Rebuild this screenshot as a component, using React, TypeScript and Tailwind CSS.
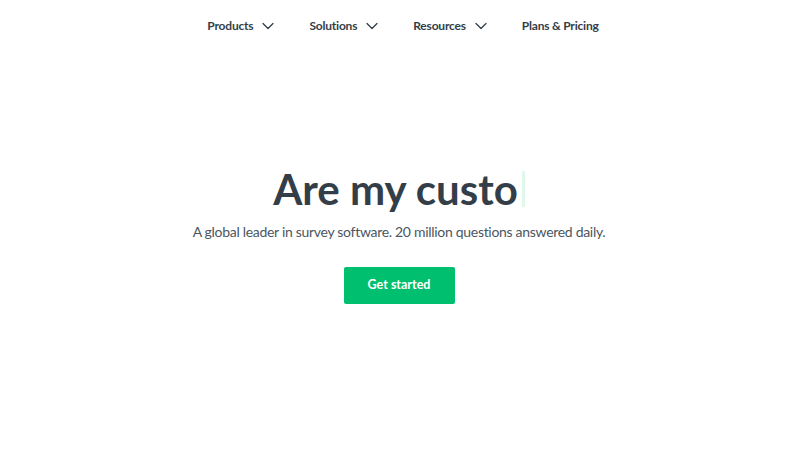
const navItems = [
  { label: "Products", menu: true },
  { label: "Solutions", menu: true },
  { label: "Resources", menu: true },
  { label: "Plans & Pricing", menu: false },
];

export default function App() {
  return (
    <div
      className="min-h-[449px] w-full bg-white text-[#333e48]"
      style={{ fontFamily: 'Lato, "Liberation Sans", sans-serif' }}
    >
      {/* Top navigation */}
      <nav className="flex h-[51px] items-center justify-center">
        <ul className="flex items-center gap-[35px] pl-[6px]">
          {navItems.map((item) => (
            <li key={item.label} className="flex items-center gap-[9px]">
              <span className="text-[12px] font-bold tracking-[-0.2px] text-[#333e48]">
                {item.label}
              </span>
              {item.menu && (
                <svg width="12" height="8" viewBox="0 0 12 8" fill="none" className="text-[#333e48]">
                  <path d="M1 1.5l5 5 5-5" stroke="currentColor" strokeWidth="1.25" strokeLinecap="round" strokeLinejoin="round" />
                </svg>
              )}
            </li>
          ))}
        </ul>
      </nav>

      {/* Hero */}
      <main className="flex flex-col items-center pt-[112px]">
        <h1 className="flex items-center pr-[2px] text-[42px] leading-[52px] font-bold text-[#333e48]">
          <span>Are my custo</span>
          <span className="ml-[4px] inline-block h-[36px] w-[3px] bg-[#e0f7ec]" />
        </h1>
        <p className="mt-[6px] pr-[2px] text-[14px] leading-[22px] tracking-[-0.3px] text-[#4b565f]">
          A global leader in survey software. 20 million questions answered daily.
        </p>
        <button className="mt-[24px] mr-[2px] h-[37px] w-[111px] rounded-[2px] bg-[#00bf6f] text-[12.5px] font-bold text-white">
          Get started
        </button>
      </main>
    </div>
  );
}
